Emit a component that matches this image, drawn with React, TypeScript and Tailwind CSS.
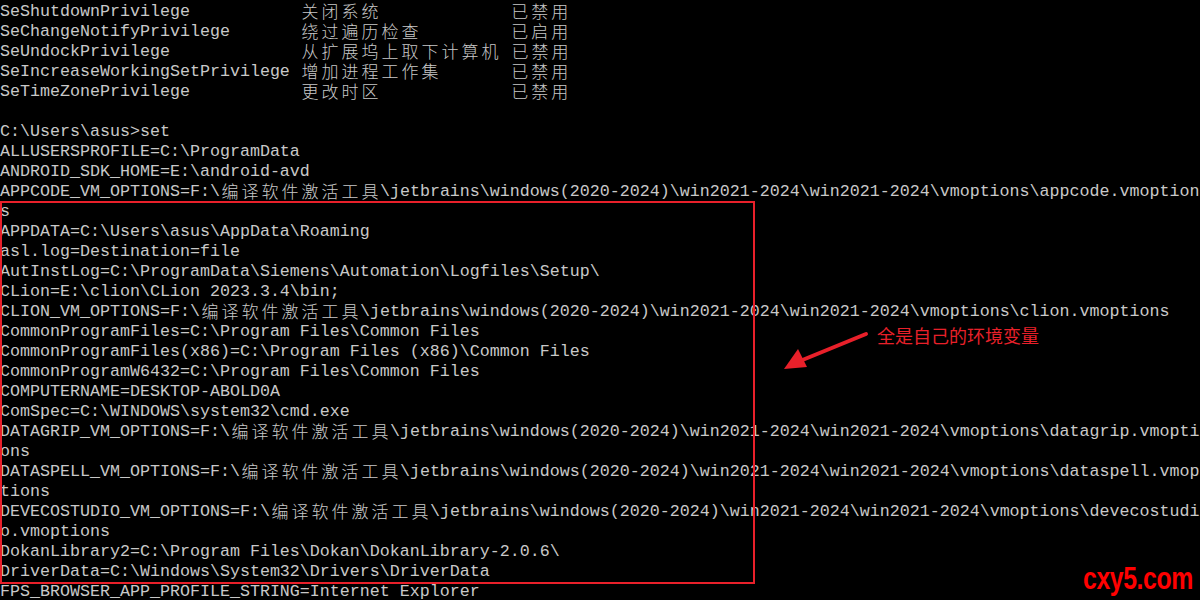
import React from "react";

const lines: string[] = [
  "SeShutdownPrivilege           关闭系统             已禁用",
  "SeChangeNotifyPrivilege       绕过遍历检查         已启用",
  "SeUndockPrivilege             从扩展坞上取下计算机 已禁用",
  "SeIncreaseWorkingSetPrivilege 增加进程工作集       已禁用",
  "SeTimeZonePrivilege           更改时区             已禁用",
  "",
  "C:\\Users\\asus>set",
  "ALLUSERSPROFILE=C:\\ProgramData",
  "ANDROID_SDK_HOME=E:\\android-avd",
  "APPCODE_VM_OPTIONS=F:\\编译软件激活工具\\jetbrains\\windows(2020-2024)\\win2021-2024\\win2021-2024\\vmoptions\\appcode.vmoption",
  "s",
  "APPDATA=C:\\Users\\asus\\AppData\\Roaming",
  "asl.log=Destination=file",
  "AutInstLog=C:\\ProgramData\\Siemens\\Automation\\Logfiles\\Setup\\",
  "CLion=E:\\clion\\CLion 2023.3.4\\bin;",
  "CLION_VM_OPTIONS=F:\\编译软件激活工具\\jetbrains\\windows(2020-2024)\\win2021-2024\\win2021-2024\\vmoptions\\clion.vmoptions",
  "CommonProgramFiles=C:\\Program Files\\Common Files",
  "CommonProgramFiles(x86)=C:\\Program Files (x86)\\Common Files",
  "CommonProgramW6432=C:\\Program Files\\Common Files",
  "COMPUTERNAME=DESKTOP-ABOLD0A",
  "ComSpec=C:\\WINDOWS\\system32\\cmd.exe",
  "DATAGRIP_VM_OPTIONS=F:\\编译软件激活工具\\jetbrains\\windows(2020-2024)\\win2021-2024\\win2021-2024\\vmoptions\\datagrip.vmopti",
  "ons",
  "DATASPELL_VM_OPTIONS=F:\\编译软件激活工具\\jetbrains\\windows(2020-2024)\\win2021-2024\\win2021-2024\\vmoptions\\dataspell.vmop",
  "tions",
  "DEVECOSTUDIO_VM_OPTIONS=F:\\编译软件激活工具\\jetbrains\\windows(2020-2024)\\win2021-2024\\win2021-2024\\vmoptions\\devecostudi",
  "o.vmoptions",
  "DokanLibrary2=C:\\Program Files\\Dokan\\DokanLibrary-2.0.6\\",
  "DriverData=C:\\Windows\\System32\\Drivers\\DriverData",
  "FPS_BROWSER_APP_PROFILE_STRING=Internet Explorer",
];

const isCJK = (c: string) => /[\u3000-\u9fff\uff00-\uffef]/.test(c);

function Line({ text }: { text: string }) {
  const parts: React.ReactNode[] = [];
  let buf = "";
  let k = 0;
  for (const ch of Array.from(text)) {
    if (isCJK(ch)) {
      if (buf) {
        parts.push(
          <span key={k++} className="whitespace-pre h-[20px] leading-[23px] shrink-0">
            {buf}
          </span>
        );
        buf = "";
      }
      parts.push(
        <span
          key={k++}
          className="w-[20px] h-[20px] shrink-0 text-center text-[17px] leading-[22px] font-['Noto_Sans_CJK_SC',sans-serif] font-light"
        >
          {ch}
        </span>
      );
    } else {
      buf += ch;
    }
  }
  if (buf)
    parts.push(
      <span key={k++} className="whitespace-pre h-[20px] leading-[23px] shrink-0">
        {buf}
      </span>
    );
  return <div className="flex items-start h-[20px] w-[1200px]">{parts}</div>;
}

export default function App() {
  return (
    <div className="relative w-[1200px] h-[600px] bg-black overflow-hidden text-[#c8c8c8] font-['Liberation_Mono',monospace] text-[16.67px]">
      <div className="flex flex-col">
        {lines.map((l, i) => (
          <Line key={i} text={l} />
        ))}
      </div>

      {/* annotation box */}
      <div className="absolute left-0 top-[201px] w-[755px] h-[383px] border-2 border-[#e8202a]" />

      {/* arrow */}
      <svg className="absolute left-0 top-0" width="1200" height="600" viewBox="0 0 1200 600">
        <line x1="866" y1="334" x2="800" y2="361" stroke="#e8202a" strokeWidth="4" strokeLinecap="round" />
        <polygon points="784,369 798,349 807,367" fill="#e8202a" />
      </svg>

      <div className="absolute left-[877px] top-[324px] text-[18px] leading-[22px] text-[#e8202a] font-['Noto_Sans_CJK_SC',sans-serif] whitespace-nowrap">
        全是自己的环境变量
      </div>

      <div className="absolute left-[1083px] top-[561px] text-[31px] leading-[36px] font-bold text-[#ff0000] font-['Liberation_Sans',sans-serif] origin-left scale-x-[0.8] whitespace-nowrap tracking-[-0.5px]">
        cxy5.com
      </div>
    </div>
  );
}
